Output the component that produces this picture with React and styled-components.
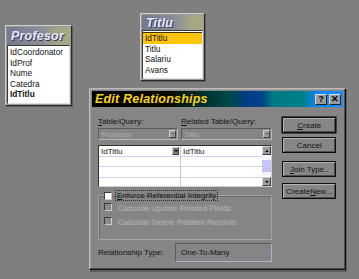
import React from "react";
import styled, { createGlobalStyle } from "styled-components";

const GlobalStyle = createGlobalStyle`
  html, body {
    margin: 0;
    padding: 0;
    background: #7f7f7f;
  }
  body {
    font-family: "Liberation Sans", Arial, sans-serif;
  }
`;

const Desktop = styled.div`
  position: relative;
  width: 359px;
  height: 279px;
  background: #7f7f7f;
  overflow: hidden;
`;

/* field list windows */

const TableWindow = styled.div`
  position: absolute;
  left: ${({ $x }) => $x}px;
  top: ${({ $y }) => $y}px;
  width: ${({ $w }) => $w}px;
  box-sizing: border-box;
  display: flex;
  flex-direction: column;
  background: #9a9a9a;
  border: 1px solid;
  border-color: #cfcfcf #2a2a2a #2a2a2a #cfcfcf;
  padding: 1px;
  box-shadow: 1px 1px 0 #5c5c5c;
`;

const TableTitle = styled.div`
  height: ${({ $h }) => $h}px;
  display: flex;
  align-items: center;
  padding-left: 4px;
  background: linear-gradient(90deg, #737a8e 0%, #8a8e98 55%, #a6a586 80%, #a9a882 100%);
  color: #e6e6ff;
  font-weight: bold;
  font-style: italic;
  font-size: 12.5px;
  letter-spacing: 0.2px;
  text-shadow: 1px 1px 0 #3a3a4a;
`;

const FieldList = styled.div`
  display: flex;
  flex-direction: column;
  background: #ffffff;
  border: 1px solid;
  border-color: #3a3a3a #e0e0e0 #e0e0e0 #3a3a3a;
  padding: 1px 0 3px;
`;

const Field = styled.div`
  height: 10.5px;
  line-height: 10.5px;
  font-size: 8.3px;
  padding-left: 2px;
  color: #101010;
  font-weight: ${({ $bold }) => ($bold ? "bold" : "normal")};
  background: ${({ $selected }) => ($selected ? "#fcc40c" : "transparent")};
  border-top: ${({ $selected }) => ($selected ? "1px solid #403000" : "0")};
  white-space: nowrap;
`;

/* dialog */

const Dialog = styled.div`
  position: absolute;
  left: 89px;
  top: 88px;
  width: 257px;
  height: 182px;
  box-sizing: border-box;
  background: #858585;
  border: 1px solid;
  border-color: #bdbdbd #101010 #101010 #bdbdbd;
  box-shadow: inset -1px -1px 0 #505050, inset 1px 1px 0 #a0a0a0, 1px 2px 0 #5e5e5e;
  padding: 2px;
  display: flex;
  flex-direction: column;
  font-size: 8px;
  color: #121212;
`;

const TitleBar = styled.div`
  height: 16px;
  display: flex;
  align-items: center;
  justify-content: space-between;
  padding: 0 2px 0 3px;
  background: linear-gradient(
    90deg,
    #000000 0%,
    #0a0a00 30%,
    #003838 48%,
    #004a4a 55%,
    #003c88 62%,
    #004488 68%,
    #007a84 72%,
    #008088 84%,
    #0a84ff 90%,
    #1a90ff 100%
  );
`;

const TitleText = styled.span`
  color: #f6d21c;
  font-weight: bold;
  font-style: italic;
  font-size: 12.5px;
  letter-spacing: 0.2px;
`;

const TitleButtons = styled.div`
  display: flex;
  gap: 2px;
`;

const TitleButton = styled.div`
  width: 12px;
  height: 11px;
  box-sizing: border-box;
  display: flex;
  align-items: center;
  justify-content: center;
  background: #9a9a9a;
  border: 1px solid;
  border-color: #d8d8d8 #202020 #202020 #d8d8d8;
  font-weight: bold;
  font-size: 9px;
  color: #000;
`;

const Body = styled.div`
  flex: 1;
  display: flex;
  gap: 10px;
  padding: 8px 7px 0 6px;
`;

const LeftColumn = styled.div`
  width: 176px;
  display: flex;
  flex-direction: column;
`;

const RightColumn = styled.div`
  width: 54px;
  display: flex;
  flex-direction: column;
  padding-top: 2px;
`;

const LabelRow = styled.div`
  display: grid;
  grid-template-columns: 83px 1fr;
  height: 12px;
  align-items: center;
`;

const Label = styled.span`
  white-space: nowrap;
  color: #141414;
`;

const Key = styled.span`
  text-decoration: underline;
`;

const ComboRow = styled.div`
  display: grid;
  grid-template-columns: 80px 1fr;
  gap: 3px;
  margin-top: 1px;
  height: 12px;
`;

const Combo = styled.div`
  display: flex;
  align-items: center;
  justify-content: space-between;
  box-sizing: border-box;
  height: 12px;
  padding: 0 1px 0 2px;
  border: 1px solid;
  border-color: #5a5a5a #b8b8b8 #b8b8b8 #5a5a5a;
  color: #a6a6a6;
  text-shadow: 1px 1px 0 #959595;
`;

const SmallArrow = styled.div`
  width: 7px;
  height: 8px;
  box-sizing: border-box;
  background: ${({ $dark }) => ($dark ? "#7a7a7a" : "#9c9c9c")};
  border: 1px solid;
  border-color: #d0d0d0 #404040 #404040 #d0d0d0;
  display: flex;
  align-items: center;
  justify-content: center;

  &::after {
    content: "";
    border-left: 2px solid transparent;
    border-right: 2px solid transparent;
    border-top: 2px solid ${({ $dark }) => ($dark ? "#000" : "#6a6a6a")};
  }
`;

const Grid = styled.div`
  margin-top: 5px;
  height: 42px;
  box-sizing: border-box;
  display: flex;
  background: #ffffff;
  border: 1px solid;
  border-color: #303030 #cfcfcf #cfcfcf #303030;
`;

const GridColumns = styled.div`
  flex: 1;
  display: flex;
  flex-direction: column;
`;

const GridRow = styled.div`
  height: ${({ $h }) => $h}px;
  display: grid;
  grid-template-columns: 82px 1fr;
  border-bottom: 1px solid #cfd0f2;
`;

const GridCell = styled.div`
  display: flex;
  align-items: center;
  justify-content: space-between;
  padding: 0 1px 0 2px;
  border-right: ${({ $divider }) => ($divider ? "1px solid #c6c6e0" : "0")};
  color: #101010;
`;

const ScrollBar = styled.div`
  width: 9px;
  display: flex;
  flex-direction: column;
  background: #f4f4fb;
`;

const ScrollButton = styled.div`
  height: 9px;
  box-sizing: border-box;
  background: #9c9c9c;
  border: 1px solid;
  border-color: #d8d8d8 #404040 #404040 #d8d8d8;
  display: flex;
  align-items: center;
  justify-content: center;

  &::after {
    content: "";
    border-left: 2px solid transparent;
    border-right: 2px solid transparent;
    ${({ $up }) =>
      $up ? "border-bottom: 2px solid #000;" : "border-top: 2px solid #000;"}
  }
`;

const ScrollTrack = styled.div`
  flex: 1;
  display: flex;
  flex-direction: column;
  justify-content: center;
`;

const ScrollThumb = styled.div`
  height: 12px;
  background: #c4c4f6;
`;

const Group = styled.fieldset`
  margin: 4px 0 0;
  padding: 2px 0 3px 5px;
  height: 49px;
  box-sizing: border-box;
  border: 1px solid #a2a2a2;
  box-shadow: inset 1px 1px 0 #6a6a6a;
  display: flex;
  flex-direction: column;
  gap: 4px;
`;

const Legend = styled.legend`
  padding: 0 1px 0 0;
  margin-left: 0;
  display: flex;
  align-items: center;
  gap: 4px;
`;

const CheckRow = styled.div`
  display: flex;
  align-items: center;
  gap: 5px;
  height: 10px;
`;

const CheckBox = styled.div`
  width: 8px;
  height: 8px;
  box-sizing: border-box;
  background: ${({ $disabled }) => ($disabled ? "#8a8a8a" : "#ffffff")};
  border: 1px solid;
  border-color: #3a3a3a #c8c8c8 #c8c8c8 #3a3a3a;
`;

const FocusText = styled.span`
  outline: 1px dotted #2a2a2a;
  padding: 0 1px;
  color: #141414;
  white-space: nowrap;
`;

const DisabledText = styled.span`
  color: #9e9e9e;
  text-shadow: 1px 1px 0 #b0b0b0;
  white-space: nowrap;
`;

const TypeRow = styled.div`
  margin-top: 3px;
  display: grid;
  grid-template-columns: 77px 1fr;
  align-items: center;
  height: 19px;
`;

const TypeBox = styled.div`
  height: 19px;
  box-sizing: border-box;
  display: flex;
  align-items: center;
  padding-left: 5px;
  border: 1px solid;
  border-color: #5c5c5c #b0b0c8 #b0b0c8 #5c5c5c;
  color: #141414;
`;

const Button = styled.div`
  height: 16px;
  box-sizing: border-box;
  display: flex;
  align-items: center;
  justify-content: center;
  margin-top: ${({ $gap }) => $gap}px;
  background: #868686;
  border: 1px solid #0c0c0c;
  box-shadow: inset 1px 1px 0 #b4b4b4, inset -1px -1px 0 #4e4e4e
    ${({ $default }) => ($default ? ", 0 0 0 0.5px #000" : "")};
  color: #141414;
  white-space: nowrap;
`;

const professorFields = ["IdCoordonator", "IdProf", "Nume", "Catedra", "IdTitlu"];
const titluFields = ["IdTitlu", "Titlu", "Salariu", "Avans"];

export default function App() {
  return (
    <Desktop>
      <GlobalStyle />

      <TableWindow $x={5} $y={25} $w={67}>
        <TableTitle $h={18}>Profesor</TableTitle>
        <FieldList>
          {professorFields.map((f, i) => (
            <Field key={f} $bold={i === 4}>
              {f}
            </Field>
          ))}
        </FieldList>
      </TableWindow>

      <TableWindow $x={140} $y={13} $w={65}>
        <TableTitle $h={15}>Titlu</TableTitle>
        <FieldList>
          {titluFields.map((f, i) => (
            <Field key={f} $selected={i === 0}>
              {f}
            </Field>
          ))}
        </FieldList>
      </TableWindow>

      <Dialog>
        <TitleBar>
          <TitleText>Edit Relationships</TitleText>
          <TitleButtons>
            <TitleButton>?</TitleButton>
            <TitleButton>✕</TitleButton>
          </TitleButtons>
        </TitleBar>

        <Body>
          <LeftColumn>
            <LabelRow>
              <Label>
                <Key>T</Key>able/Query:
              </Label>
              <Label>
                <Key>R</Key>elated Table/Query:
              </Label>
            </LabelRow>
            <ComboRow>
              <Combo>
                Profesor
                <SmallArrow />
              </Combo>
              <Combo>
                Titlu
                <SmallArrow />
              </Combo>
            </ComboRow>

            <Grid>
              <GridColumns>
                <GridRow $h={11}>
                  <GridCell $divider>
                    IdTitlu
                    <SmallArrow $dark />
                  </GridCell>
                  <GridCell>IdTitlu</GridCell>
                </GridRow>
                <GridRow $h={9}>
                  <GridCell $divider />
                  <GridCell />
                </GridRow>
                <GridRow $h={11}>
                  <GridCell $divider />
                  <GridCell />
                </GridRow>
                <GridRow $h={9} style={{ borderBottom: 0 }}>
                  <GridCell $divider />
                  <GridCell />
                </GridRow>
              </GridColumns>
              <ScrollBar>
                <ScrollButton $up />
                <ScrollTrack>
                  <ScrollThumb />
                </ScrollTrack>
                <ScrollButton />
              </ScrollBar>
            </Grid>

            <Group>
              <Legend>
                <CheckBox />
                <FocusText>
                  <Key>E</Key>nforce Referential Integrity
                </FocusText>
              </Legend>
              <CheckRow>
                <CheckBox $disabled />
                <DisabledText>Cascade Update Related Fields</DisabledText>
              </CheckRow>
              <CheckRow>
                <CheckBox $disabled />
                <DisabledText>Cascade Delete Related Records</DisabledText>
              </CheckRow>
            </Group>

            <TypeRow>
              <Label>Relationship Type:</Label>
              <TypeBox>One-To-Many</TypeBox>
            </TypeRow>
          </LeftColumn>

          <RightColumn>
            <Button $default>
              <Key>C</Key>reate
            </Button>
            <Button $gap={4}>Cancel</Button>
            <Button $gap={8}>
              <Key>J</Key>oin Type..
            </Button>
            <Button $gap={6}>
              Create <Key>N</Key>ew...
            </Button>
          </RightColumn>
        </Body>
      </Dialog>
    </Desktop>
  );
}
